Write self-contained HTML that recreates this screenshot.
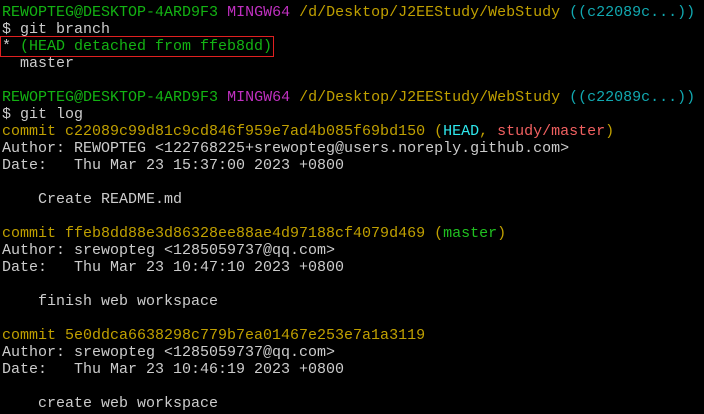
<html><head><style>
body{margin:0;background:#000;width:704px;height:414px;overflow:hidden}
pre{margin:0;padding:4px 0 0 2px;font-family:"Liberation Mono",monospace;font-size:15px;line-height:17px;color:#cccccc;letter-spacing:0}
.g{color:#13b313}.p{color:#c030c0}.y{color:#c0a000}.c{color:#11a8b0}.hc{color:#2ee8ee}.r{color:#f06060}.gm{color:#20c020}
.box{outline:1px solid #e02020;outline-offset:1px}
</style></head><body><pre><span class="g">REWOPTEG@DESKTOP-4ARD9F3</span> <span class="p">MINGW64</span> <span class="y">/d/Desktop/J2EEStudy/WebStudy</span> <span class="c">((c22089c...))</span>
$ git branch
<span class="box">* <span class="g">(HEAD detached from ffeb8dd)</span></span>
  master

<span class="g">REWOPTEG@DESKTOP-4ARD9F3</span> <span class="p">MINGW64</span> <span class="y">/d/Desktop/J2EEStudy/WebStudy</span> <span class="c">((c22089c...))</span>
$ git log
<span class="y">commit c22089c99d81c9cd846f959e7ad4b085f69bd150 (</span><span class="hc">HEAD</span><span class="y">, </span><span class="r">study/master</span><span class="y">)</span>
Author: REWOPTEG &lt;122768225+srewopteg@users.noreply.github.com&gt;
Date:   Thu Mar 23 15:37:00 2023 +0800

    Create README.md

<span class="y">commit ffeb8dd88e3d86328ee88ae4d97188cf4079d469 (</span><span class="gm">master</span><span class="y">)</span>
Author: srewopteg &lt;1285059737@qq.com&gt;
Date:   Thu Mar 23 10:47:10 2023 +0800

    finish web workspace

<span class="y">commit 5e0ddca6638298c779b7ea01467e253e7a1a3119</span>
Author: srewopteg &lt;1285059737@qq.com&gt;
Date:   Thu Mar 23 10:46:19 2023 +0800

    create web workspace
</pre></body></html>
